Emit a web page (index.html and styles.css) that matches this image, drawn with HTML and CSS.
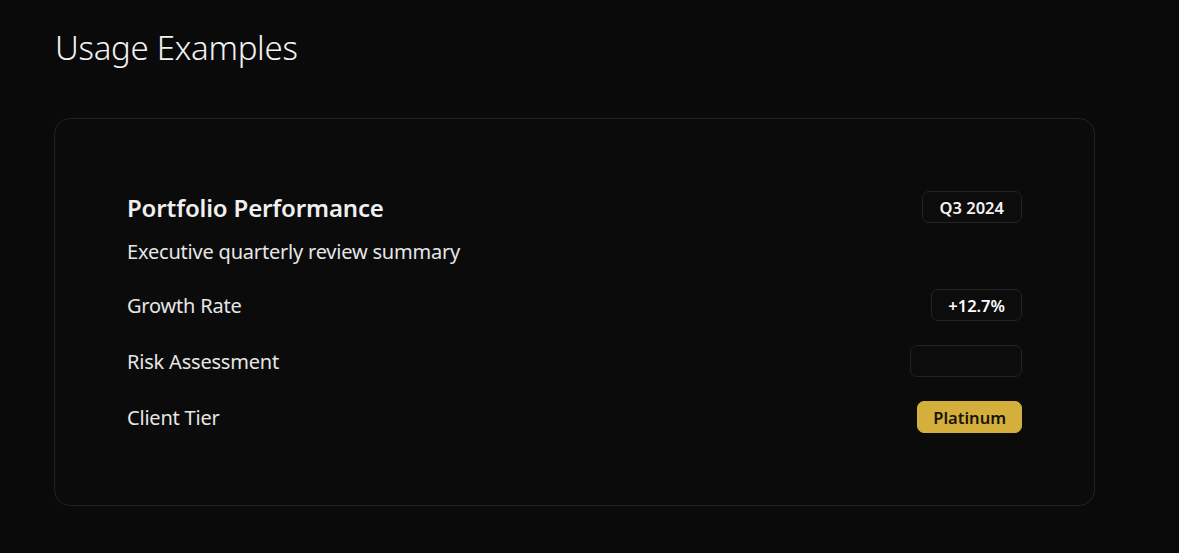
FILE: index.html
```html
<!DOCTYPE html>
<html lang="en">
<head>
<meta charset="utf-8">
<title>Usage Examples</title>
<link rel="stylesheet" href="styles.css">
</head>
<body>
<main class="page">
  <h1 class="page-title">Usage Examples</h1>
  <section class="card">
    <div class="card-header">
      <h2 class="card-title">Portfolio Performance</h2>
      <span class="badge badge-date">Q3 2024</span>
    </div>
    <p class="card-subtitle">Executive quarterly review summary</p>
    <div class="rows">
      <div class="row">
        <span class="row-label">Growth Rate</span>
        <span class="badge badge-strong">+12.7%</span>
      </div>
      <div class="row">
        <span class="row-label">Risk Assessment</span>
        <span class="badge badge-empty"></span>
      </div>
      <div class="row">
        <span class="row-label">Client Tier</span>
        <span class="badge badge-gold">Platinum</span>
      </div>
    </div>
  </section>
</main>
</body>
</html>
```
FILE: styles.css
```css
* { box-sizing: border-box; }
html, body {
  margin: 0;
  padding: 0;
  background: #0a0a0a;
}
body {
  font-family: "Noto Sans", "Open Sans", sans-serif;
  color: #ececec;
}
.page {
  padding: 26px 84px 0 54px;
}
.page-title {
  margin: 0 0 48px 1px;
  font-size: 33px;
  font-weight: 300;
  line-height: 44px;
  color: #f2f2f2;
  letter-spacing: -0.3px;
}
.card {
  width: 1041px;
  border: 1px solid #232323;
  border-radius: 16px;
  background: #0b0b0b;
  padding: 72px 72px 72px 72px;
}
.card-header {
  display: flex;
  align-items: center;
  justify-content: space-between;
  height: 32px;
}
.card-title {
  margin: 0;
  font-size: 24px;
  font-weight: 600;
  color: #f0f0f0;
  letter-spacing: -0.15px;
}
.card-subtitle {
  margin: 15px 0 0 0;
  font-size: 20px;
  line-height: 28px;
  color: #e6e6e6;
  letter-spacing: -0.2px;
}
.rows {
  display: flex;
  flex-direction: column;
  gap: 24px;
  margin-top: 23px;
}
.row {
  display: flex;
  align-items: center;
  justify-content: space-between;
  height: 32px;
}
.row-label {
  font-size: 20px;
  color: #e6e6e6;
  letter-spacing: -0.2px;
}
.badge {
  display: inline-flex;
  align-items: center;
  justify-content: center;
  height: 32px;
  padding: 0 15px;
  border: 1px solid #242424;
  border-radius: 7px;
  background: #0c0c0c;
  font-size: 16.5px;
  font-weight: 600;
  color: #f2f2f2;
}
.badge-date {
  padding: 0 17px;
}
.badge-strong {
  color: #ffffff;
  padding: 0 16px;
}
.badge-empty {
  width: 112px;
}
.badge-gold {
  background: #d5af3b;
  border-color: #d5af3b;
  color: #1a1408;
}
```
